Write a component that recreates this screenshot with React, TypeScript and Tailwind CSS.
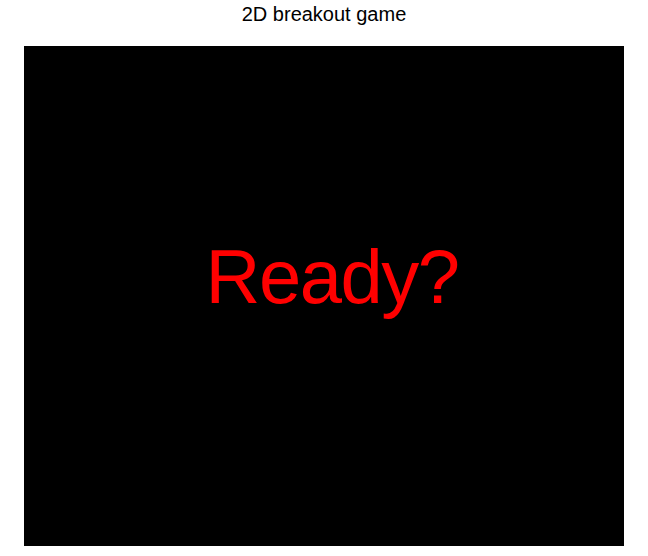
import React from 'react';

const App: React.FC = () => {
  return (
    <div className="w-[648px] h-[556px] bg-white flex flex-col items-center" style={{ fontFamily: '"Comic Sans MS", "Liberation Sans", sans-serif' }}>
      {/* Title */}
      <h1 className="h-[46px] pt-[2px] text-[20px] leading-[24px] text-black font-normal">2D breakout game</h1>

      {/* Game canvas */}
      <div className="w-[600px] h-[500px] bg-black flex justify-center pt-[193px] pl-[16px]">
        <span className="text-[76px] leading-[76px] tracking-[-1.5px] text-[#ff0000]">Ready?</span>
      </div>
    </div>
  );
};

export default App;
